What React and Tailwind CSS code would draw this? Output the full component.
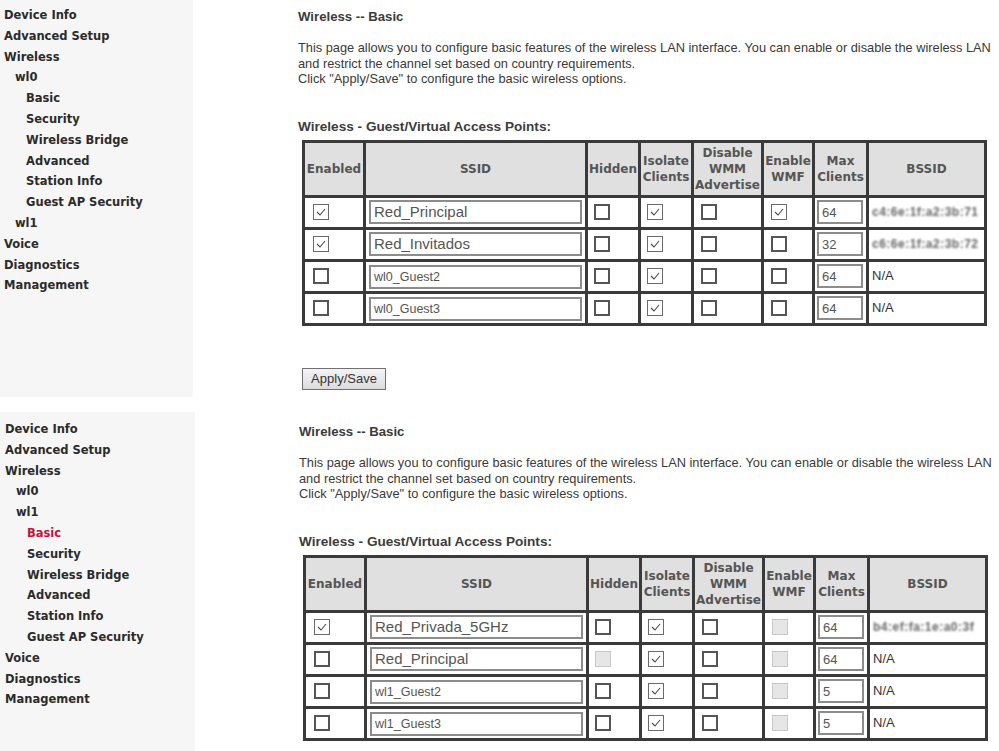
import React from 'react';

const sideFont = { fontFamily: '"DejaVu Sans", Verdana, sans-serif' };
const bodyFont = { fontFamily: '"Liberation Sans", Arial, sans-serif' };

const navTop = [
    { label: 'Device Info', lvl: 0 },
    { label: 'Advanced Setup', lvl: 0 },
    { label: 'Wireless', lvl: 0 },
    { label: 'wl0', lvl: 1 },
    { label: 'Basic', lvl: 2 },
    { label: 'Security', lvl: 2 },
    { label: 'Wireless Bridge', lvl: 2 },
    { label: 'Advanced', lvl: 2 },
    { label: 'Station Info', lvl: 2 },
    { label: 'Guest AP Security', lvl: 2 },
    { label: 'wl1', lvl: 1 },
    { label: 'Voice', lvl: 0 },
    { label: 'Diagnostics', lvl: 0 },
    { label: 'Management', lvl: 0 },
];

const navBottom = [
    { label: 'Device Info', lvl: 0 },
    { label: 'Advanced Setup', lvl: 0 },
    { label: 'Wireless', lvl: 0 },
    { label: 'wl0', lvl: 1 },
    { label: 'wl1', lvl: 1 },
    { label: 'Basic', lvl: 2, active: true },
    { label: 'Security', lvl: 2 },
    { label: 'Wireless Bridge', lvl: 2 },
    { label: 'Advanced', lvl: 2 },
    { label: 'Station Info', lvl: 2 },
    { label: 'Guest AP Security', lvl: 2 },
    { label: 'Voice', lvl: 0 },
    { label: 'Diagnostics', lvl: 0 },
    { label: 'Management', lvl: 0 },
];

const rowsTop = [
    { en: 'on', ssid: 'Red_Principal', big: true, hid: 'off', iso: 'on', wmm: 'off', wmf: 'on', max: '64', bssid: 'c4:6e:1f:a2:3b:71' },
    { en: 'on', ssid: 'Red_Invitados', big: true, hid: 'off', iso: 'on', wmm: 'off', wmf: 'off', max: '32', bssid: 'c6:6e:1f:a2:3b:72' },
    { en: 'off', ssid: 'wl0_Guest2', hid: 'off', iso: 'on', wmm: 'off', wmf: 'off', max: '64', bssid: 'N/A' },
    { en: 'off', ssid: 'wl0_Guest3', hid: 'off', iso: 'on', wmm: 'off', wmf: 'off', max: '64', bssid: 'N/A' },
];

const rowsBottom = [
    { en: 'on', ssid: 'Red_Privada_5GHz', big: true, hid: 'off', iso: 'on', wmm: 'off', wmf: 'dis', max: '64', bssid: 'b4:ef:fa:1e:a0:3f' },
    { en: 'off', ssid: 'Red_Principal', big: true, hid: 'dis', iso: 'on', wmm: 'off', wmf: 'dis', max: '64', bssid: 'N/A' },
    { en: 'off', ssid: 'wl1_Guest2', hid: 'off', iso: 'on', wmm: 'off', wmf: 'dis', max: '5', bssid: 'N/A' },
    { en: 'off', ssid: 'wl1_Guest3', hid: 'off', iso: 'on', wmm: 'off', wmf: 'dis', max: '5', bssid: 'N/A' },
];

const Box = ({ state }) => {
    if (state === 'dis') {
        return <div className="w-4 h-4 border border-[#c8c8c8] bg-[#e6e6e6]" />;
    }
    if (state === 'on') {
        return (
            <div className="w-4 h-4 border border-[#6a6a6a] bg-white flex items-center justify-center">
                <svg width="10" height="8" viewBox="0 0 10 8">
                    <polyline points="1,4 4,7 9,1" fill="none" stroke="#4a4a4a" strokeWidth="1.1" />
                </svg>
            </div>
        );
    }
    return <div className="w-4 h-4 border-2 border-[#555] bg-white" />;
};

const Sidebar = ({ items, width, pt, pl }) => (
    <aside className={`${width} ${pt} ${pl} bg-[#f6f6f6] shrink-0`} style={sideFont}>
        {items.map((it) => (
            <div
                key={it.label}
                className={`text-[11.5px] font-bold leading-[20.8px] whitespace-nowrap ${it.active ? 'text-[#c4123a]' : 'text-[#2b2b2b]'} ${it.lvl === 1 ? 'pl-[11px]' : it.lvl === 2 ? 'pl-[22px]' : ''}`}
            >
                {it.label}
            </div>
        ))}
    </aside>
);

const th = 'border-[3px] border-[#3a3a3a] bg-[#e0e0e0] text-[#555] font-bold text-[12px] leading-[16px] text-center align-middle p-0';
const td = 'border-[3px] border-[#3a3a3a] bg-white p-0 h-[29px] align-middle';

const ApTable = ({ rows }) => (
    <table className="border-collapse table-fixed w-[682px]">
        <colgroup>
            <col className="w-[61px]" />
            <col className="w-[222px]" />
            <col className="w-[53px]" />
            <col className="w-[53px]" />
            <col className="w-[70px]" />
            <col className="w-[51px]" />
            <col className="w-[54px]" />
            <col className="w-[118px]" />
        </colgroup>
        <thead style={sideFont}>
            <tr className="h-[55px]">
                <th className={th}>Enabled</th>
                <th className={th}>SSID</th>
                <th className={th}>Hidden</th>
                <th className={th}>Isolate<br />Clients</th>
                <th className={th}>Disable<br />WMM<br />Advertise</th>
                <th className={th}>Enable<br />WMF</th>
                <th className={th}>Max<br />Clients</th>
                <th className={th}>BSSID</th>
            </tr>
        </thead>
        <tbody style={bodyFont}>
            {rows.map((r) => (
                <tr key={r.ssid} className="h-[32px]">
                    <td className={`${td} pl-[8px]`}><Box state={r.en} /></td>
                    <td className={`${td} px-[3px]`}>
                        <input
                            readOnly
                            value={r.ssid}
                            className={`w-full h-[24px] border-2 border-[#8c8c8c] px-[3px] text-[#555] outline-none ${r.big ? 'text-[15px]' : 'text-[12.5px]'}`}
                            style={bodyFont}
                        />
                    </td>
                    <td className={`${td} pl-[6px]`}><Box state={r.hid} /></td>
                    <td className={`${td} pl-[6px]`}><Box state={r.iso} /></td>
                    <td className={`${td} pl-[7px]`}><Box state={r.wmm} /></td>
                    <td className={`${td} pl-[7px]`}><Box state={r.wmf} /></td>
                    <td className={`${td} px-[2px]`}>
                        <input
                            readOnly
                            value={r.max}
                            className="w-[46px] h-[24px] border-2 border-[#8c8c8c] px-[3px] text-[13px] text-[#555] outline-none"
                            style={bodyFont}
                        />
                    </td>
                    <td className={`${td} pl-[3px] text-[13px] text-[#333] whitespace-nowrap overflow-hidden`}>
                        {r.bssid === 'N/A' ? 'N/A' : (
                            <span className="text-[#666] text-[12px] font-bold tracking-[0.5px] blur-[1.2px]">{r.bssid}</span>
                        )}
                    </td>
                </tr>
            ))}
        </tbody>
    </table>
);

const Content = ({ rows, pt, pl, showButton }) => (
    <main className={`flex-1 ${pt} ${pl} text-[#333] whitespace-nowrap`} style={bodyFont}>
        <div className="text-[13.2px] font-bold leading-[14px] text-[#3c3c3c]">Wireless -- Basic</div>
        <p className="mt-[16px] text-[12.8px] leading-[15.5px] text-[#3a3a3a]">
            This page allows you to configure basic features of the wireless LAN interface. You can enable or disable the wireless LAN
            <br />
            and restrict the channel set based on country requirements.
            <br />
            Click "Apply/Save" to configure the basic wireless options.
        </p>
        <div className="mt-[33px] text-[13.6px] font-bold leading-[14px] text-[#3c3c3c]">Wireless - Guest/Virtual Access Points:</div>
        <div className="mt-[6px] pl-[4px]">
            <ApTable rows={rows} />
        </div>
        {showButton && (
            <button
                className="mt-[42px] ml-[4px] w-[84px] h-[22px] border border-[#707070] bg-gradient-to-b from-[#f4f4f4] to-[#dcdcdc] text-[13px] text-[#333]"
                style={bodyFont}
            >
                Apply/Save
            </button>
        )}
    </main>
);

export default function App() {
    return (
        <div className="w-[999px] h-[751px] overflow-hidden bg-white">
            <div className="flex h-[397px]">
                <Sidebar items={navTop} width="w-[193px]" pt="pt-[5px]" pl="pl-[4px]" />
                <Content rows={rowsTop} pt="pt-[10px]" pl="pl-[105px]" showButton />
            </div>
            <div className="flex mt-[15px] h-[400px]">
                <Sidebar items={navBottom} width="w-[195px]" pt="pt-[7px]" pl="pl-[5px]" />
                <Content rows={rowsBottom} pt="pt-[13px]" pl="pl-[104px]" />
            </div>
        </div>
    );
}
